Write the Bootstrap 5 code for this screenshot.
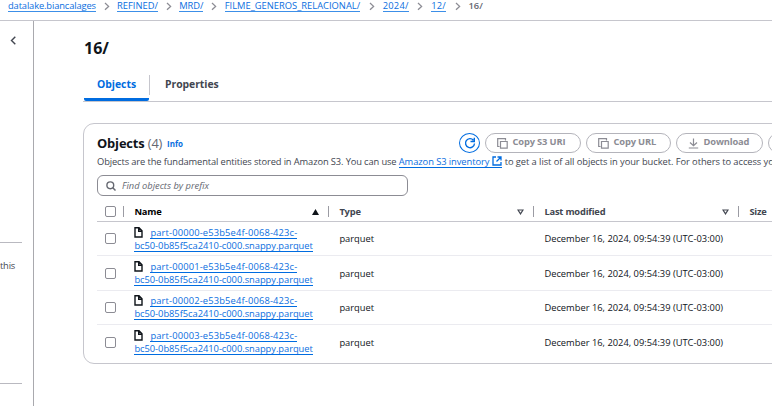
<!DOCTYPE html>
<html lang="en">
<head>
<meta charset="utf-8">
<title>16/ - S3 bucket</title>
<meta name="viewport" content="width=device-width, initial-scale=1">
<link href="https://cdn.jsdelivr.net/npm/bootstrap@5.3.0/dist/css/bootstrap.min.css" rel="stylesheet">
<style>
html,body{height:406px;overflow:hidden}
body{font-family:"Open Sans","Noto Sans",sans-serif;font-size:9.33px;line-height:13px;color:#0f141a;background:#fff;white-space:nowrap}
svg{display:block;flex:none;fill:none}
a{color:#0a6ee0;text-decoration:none}
.crumbs{height:21px;border-bottom:1px solid #c6c6cd;padding-left:8px}
.crumbs .crumb{height:12px;line-height:12px;border-bottom:1px solid #3c8fe8;flex:none}
.crumbs .bucket{letter-spacing:-.13px}
.crumbs .dir{letter-spacing:.02px}
.crumbs .date-dir{letter-spacing:.25px}
.crumbs svg{margin-left:8px;margin-right:7.2px;margin-top:2px}
.crumbs .wide{margin-left:8.5px;margin-right:8px}
.crumbs .here{color:#656871;font-weight:600;line-height:12px}
.side{width:34px;height:385px;border-right:1px solid #a9a9ae;flex:none}
.side hr{width:22px;margin:0;border:0;border-top:1px solid #b9b9c0;opacity:1}
.side .toggle{padding:15px 0 0 10px;height:221px}
.side .note{height:140px;padding-top:16px;color:#424650;letter-spacing:-.2px}
.pane{width:738px;padding-left:49px;overflow:hidden}
.title{font-size:16px;line-height:22px;font-weight:700;margin:16px 0 0 1px}
.tabbar{height:33px;margin-top:10px;border-bottom:1px solid #c6c6cd;font-size:10.4px;font-weight:700;line-height:25px}
.tabbar .tab{height:32px;width:65px;text-align:center;color:#006ce0;border-bottom:3px solid #006ce0;border-radius:0 0 2px 2px;margin-left:1px;padding-top:3px}
.tabbar .tab-off{border-left:1px solid #c6c6cd;height:20px;color:#424650;padding-left:15px;margin-top:6px;line-height:19px;letter-spacing:-.05px}
.panel{width:740px;height:241px;margin-top:21px;border:1px solid #c6c6cd;border-radius:11px;padding-left:13px}
.head{height:21px;margin-top:9px}
.head h2{font-size:12.9px;line-height:20px;margin:0;font-weight:700;width:70px;flex:none;letter-spacing:-.15px}
.head h2 span{font-weight:400;color:#656871}
.head .info{font-size:8px;font-weight:700;line-height:12px;padding-top:5px;width:292px;flex:none}
.pill{height:20px;border:1px solid #b4b4bb;border-radius:10px;color:#8c8c94;font-weight:700;line-height:16px;padding-left:11px;margin-right:5px;flex:none;letter-spacing:-.15px}
.pill svg{margin-right:4.5px;margin-top:1px}
.pill span{height:18px}
.pill-uri{width:96px}
.pill-url{width:85px}
.pill-down{width:87px}
.pill-next{width:60px}
.refresh{width:21px;height:20px;border:1px solid #006ce0;border-radius:50%;margin-right:5px;flex:none}
.about{color:#424650;height:14px;margin-top:1px;letter-spacing:-.12px}
.about .ul{border-bottom:1px solid #006ce0;line-height:11px;height:13px;padding-top:1px;letter-spacing:-.07px}
.about .ul svg{margin-left:3px}
.about .rest{letter-spacing:-.065px}
.find{width:311px;height:21px;border:1px solid #8c8c94;border-radius:6px;margin-top:6px;padding-left:8px;color:#656871;font-style:italic}
.find svg{margin-right:6px}
.cols{font-weight:700;color:#424650;height:26px;border-bottom:1px solid #c6c6cd;padding-top:6px;letter-spacing:-.2px}
.line{height:34.4px;border-bottom:1px solid #ebebf0}
.line:last-child{border-bottom:0}
.tick{width:11px;height:11px;border:1px solid #8c8c94;border-radius:2px;margin-left:8px;flex:none}
.c-pick{width:37.4px;flex:none}
.c-name,.c-type,.c-date{width:205px;flex:none}
.cols .c-pick,.cols .c-name,.cols .c-type,.cols .c-date{height:11px;line-height:11px}
.cols .sep{width:1px;height:11px;background:#9b9ba3;margin-right:10.4px}
.cols .tri{margin-right:9px}
.fname{height:26px;padding-top:1px}
.fname a{display:inline-block;height:12px;line-height:11px;border-bottom:1px solid #006ce0}
.fname svg{margin-right:7px}
.fname .second{margin-top:1px}
.f-a{letter-spacing:.16px}
.f-b{letter-spacing:-.03px}
</style>
<script src="https://cdn.jsdelivr.net/npm/bootstrap@5.3.0/dist/js/bootstrap.bundle.min.js"></script>
</head>
<body>
<svg width="0" height="0" class="d-none">
<symbol id="chev" viewBox="0 0 6 9"><path d="M1 1l3.6 3.4L1 7.8" stroke="#8c8c94" stroke-width="1.3"/></symbol>
<symbol id="copy" viewBox="0 0 11 11"><path d="M2.5 8.5h-1.800v-7.800h7.800v1.800M3.500 3.500h6.700v6.700h-6.700z" stroke="#8c8c94" stroke-width="1.2"/></symbol>
<symbol id="file" viewBox="0 0 9 11"><path d="M1 .8h4L8 3.800v6.200H1zM4.700 1v3.200H8" stroke="#0f141a" stroke-width="1.400"/></symbol>
<symbol id="down" viewBox="0 0 7 6"><path d="M1 1h5L3.500 4.800z" stroke="#424650" stroke-width="1.200"/></symbol>
</svg>
<nav class="crumbs d-flex align-items-start">
<a class="crumb bucket" href="#">datalake.biancalages</a><svg width="6" height="9"><use href="#chev"/></svg>
<a class="crumb dir" href="#">REFINED/</a><svg width="6" height="9"><use href="#chev"/></svg>
<a class="crumb" href="#">MRD/</a><svg width="6" height="9"><use href="#chev"/></svg>
<a class="crumb dir" href="#">FILME_GENEROS_RELACIONAL/</a><svg class="wide" width="6" height="9"><use href="#chev"/></svg>
<a class="crumb date-dir" href="#">2024/</a><svg class="wide" width="6" height="9"><use href="#chev"/></svg>
<a class="crumb date-dir" href="#">12/</a><svg class="wide" width="6" height="9"><use href="#chev"/></svg>
<span class="here">16/</span>
</nav>
<div class="d-flex">
<aside class="side">
<div class="toggle"><svg width="7" height="9" viewBox="0 0 7 9"><path d="M5.300 .8L1.500 4.500l3.800 3.700" stroke="#424650" stroke-width="1.400"/></svg></div>
<hr><div class="note">this</div><hr>
</aside>
<main class="pane">
<h1 class="title">16/</h1>
<div class="tabbar d-flex"><div class="tab">Objects</div><div class="tab-off">Properties</div></div>
<section class="panel">
<div class="head d-flex">
<h2>Objects <span>(4)</span></h2><a href="#" class="info">Info</a>
<div class="refresh d-flex align-items-center justify-content-center"><svg width="12" height="12" viewBox="0 0 12 12"><path d="M10.500 6.500A4.500 4.500 0 1 1 9.400 3.200M10.300.8v3.700H6.500" stroke="#006ce0" stroke-width="1.400"/></svg></div>
<div class="pill pill-uri d-flex align-items-center"><svg width="11" height="11"><use href="#copy"/></svg><span>Copy S3 URI</span></div>
<div class="pill pill-url d-flex align-items-center"><svg width="11" height="11"><use href="#copy"/></svg><span>Copy URL</span></div>
<div class="pill pill-down d-flex align-items-center"><svg width="11" height="11" viewBox="0 0 11 11"><path d="M5.500.5v7M2 4.500l3.500 3.300L9 4.500M.8 10h9.400" stroke="#8c8c94" stroke-width="1.200"/></svg><span>Download</span></div>
<div class="pill pill-next"></div>
</div>
<div class="about d-flex"><span>Objects are the fundamental entities stored in Amazon S3. You can use&nbsp;</span><a href="#" class="ul d-flex">Amazon S3 inventory<svg width="10" height="10" viewBox="0 0 10 10"><path d="M4 1H1v8h8V6M5.500 1H9v3.500M9 1L4.500 5.500" stroke="#006ce0" stroke-width="1.300"/></svg></a><span class="rest">&nbsp;to get a list of all objects in your bucket. For others to access yo</span></div>
<div class="find d-flex align-items-center"><svg width="10" height="10" viewBox="0 0 10 10"><circle cx="4.300" cy="4.300" r="3.400" stroke="#656871" stroke-width="1.400"/><path d="M6.800 6.800l2.700 2.700" stroke="#656871" stroke-width="1.500"/></svg><span>Find objects by prefix</span></div>
<div class="cols d-flex align-items-center">
<div class="c-pick d-flex"><div class="tick"></div><div class="sep ms-auto"></div></div>
<div class="c-name d-flex align-items-center"><span class="me-auto text-black">Name</span><svg class="tri" width="7" height="6" viewBox="0 0 7 6"><path d="M0 6h7L3.500 0z" fill="#0f141a"/></svg><div class="sep"></div></div>
<div class="c-type d-flex align-items-center"><span class="me-auto">Type</span><svg class="tri" width="7" height="6"><use href="#down"/></svg><div class="sep"></div></div>
<div class="c-date d-flex align-items-center"><span class="me-auto">Last modified</span><svg class="tri" width="7" height="6"><use href="#down"/></svg><div class="sep"></div></div>
<div>Size</div>
</div>
<div>
<div class="line d-flex align-items-center"><div class="c-pick"><div class="tick"></div></div><div class="c-name fname"><div class="d-flex"><svg width="9" height="11"><use href="#file"/></svg><a href="#" class="f-a">part-00000-e53b5e4f-0068-423c-</a></div><a href="#" class="second f-b">bc50-0b85f5ca2410-c000.snappy.parquet</a></div><div class="c-type">parquet</div><div>December 16, 2024, 09:54:39 (UTC-03:00)</div></div>
<div class="line d-flex align-items-center"><div class="c-pick"><div class="tick"></div></div><div class="c-name fname"><div class="d-flex"><svg width="9" height="11"><use href="#file"/></svg><a href="#" class="f-a">part-00001-e53b5e4f-0068-423c-</a></div><a href="#" class="second f-b">bc50-0b85f5ca2410-c000.snappy.parquet</a></div><div class="c-type">parquet</div><div>December 16, 2024, 09:54:39 (UTC-03:00)</div></div>
<div class="line d-flex align-items-center"><div class="c-pick"><div class="tick"></div></div><div class="c-name fname"><div class="d-flex"><svg width="9" height="11"><use href="#file"/></svg><a href="#" class="f-a">part-00002-e53b5e4f-0068-423c-</a></div><a href="#" class="second f-b">bc50-0b85f5ca2410-c000.snappy.parquet</a></div><div class="c-type">parquet</div><div>December 16, 2024, 09:54:39 (UTC-03:00)</div></div>
<div class="line d-flex align-items-center"><div class="c-pick"><div class="tick"></div></div><div class="c-name fname"><div class="d-flex"><svg width="9" height="11"><use href="#file"/></svg><a href="#" class="f-a">part-00003-e53b5e4f-0068-423c-</a></div><a href="#" class="second f-b">bc50-0b85f5ca2410-c000.snappy.parquet</a></div><div class="c-type">parquet</div><div>December 16, 2024, 09:54:39 (UTC-03:00)</div></div>
</div>
</section>
</main>
</div>
</body>
</html>
